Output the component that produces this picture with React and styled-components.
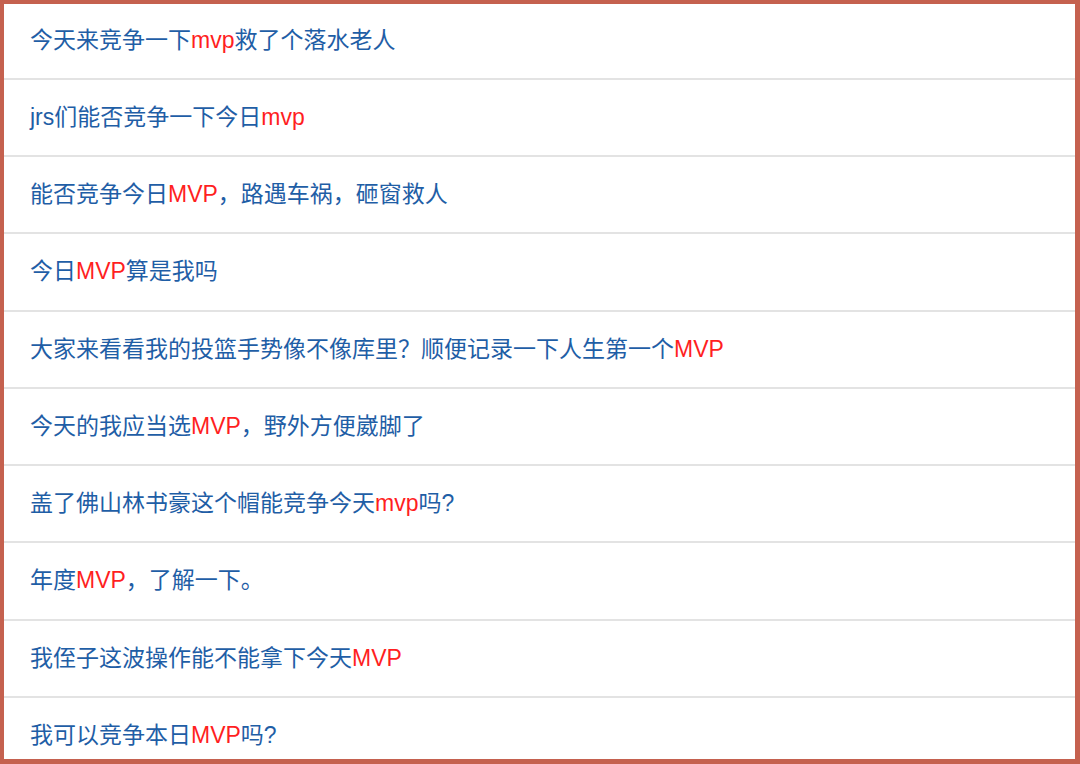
import React from "react";
import styled, { createGlobalStyle } from "styled-components";

const Global = createGlobalStyle`
  html, body { margin: 0; padding: 0; background: #ffffff; }
  body { font-family: "Liberation Sans", "Noto Sans CJK SC", sans-serif; }
`;

const Frame = styled.div`
  width: 1080px;
  height: 764px;
  box-sizing: border-box;
  border-style: solid;
  border-color: #c5614f;
  border-width: 4px 5px 5px 4px;
  background: #ffffff;
  overflow: hidden;
`;

const List = styled.ul`
  list-style: none;
  margin: -1.5px 0 0 0;
  padding: 0;
`;

const Row = styled.li`
  height: 77.25px;
  box-sizing: border-box;
  border-bottom: 2px solid #e3e3e3;
  display: flex;
  align-items: center;
  padding-left: 26px;
  font-size: 23px;
  line-height: 1;
  color: #1f5ea6;
  white-space: nowrap;
`;

const Hot = styled.span`
  color: #ff1f1f;
`;

const items = [
  ["今天来竞争一下", "mvp", "救了个落水老人"],
  ["jrs们能否竞争一下今日", "mvp", ""],
  ["能否竞争今日", "MVP", "，路遇车祸，砸窗救人"],
  ["今日", "MVP", "算是我吗"],
  ["大家来看看我的投篮手势像不像库里？顺便记录一下人生第一个", "MVP", ""],
  ["今天的我应当选", "MVP", "，野外方便崴脚了"],
  ["盖了佛山林书豪这个帽能竞争今天", "mvp", "吗?"],
  ["年度", "MVP", "，了解一下。"],
  ["我侄子这波操作能不能拿下今天", "MVP", ""],
  ["我可以竞争本日", "MVP", "吗?"],
];

export default function App() {
  return (
    <>
      <Global />
      <Frame>
        <List>
          {items.map(([a, b, c], i) => (
            <Row key={i}>
              {a}
              <Hot>{b}</Hot>
              {c}
            </Row>
          ))}
        </List>
      </Frame>
    </>
  );
}
